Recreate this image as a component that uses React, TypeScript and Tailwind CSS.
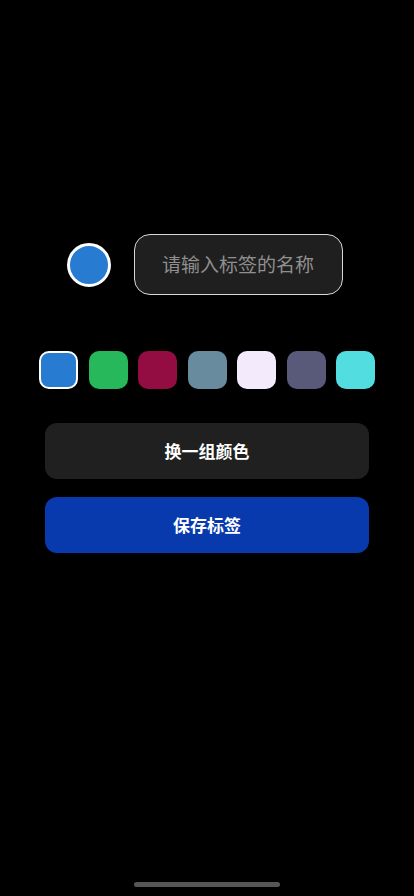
import React from "react";

const colors = ["#277cd2", "#27b85c", "#930d43", "#688b9e", "#f3eafb", "#59597a", "#52dde0"];

export default function App() {
  return (
    <div
      className="relative h-[896px] w-[414px] overflow-hidden bg-black"
      style={{ fontFamily: '"Noto Sans CJK SC", "Noto Sans", sans-serif' }}
    >
      <div className="flex flex-col items-center pt-[234px]">
        <div className="flex items-center gap-[23px] pr-[5px]">
          <div className="h-[44px] w-[44px] rounded-full border-[3px] border-white bg-[#277cd2]" />
          <div className="flex h-[61px] w-[209px] items-center justify-center rounded-[16px] border border-[#d8d8d8] bg-[#1f1f1f]">
            <span className="text-[19px] text-[#8f8f8f]">请输入标签的名称</span>
          </div>
        </div>

        <div className="mt-[56px] flex gap-[10.5px]">
          {colors.map((c, i) => (
            <div
              key={c}
              className={
                i === 0
                  ? "h-[38px] w-[39px] rounded-[10px] border-2 border-white"
                  : "h-[38px] w-[39px] rounded-[10px]"
              }
              style={{ backgroundColor: c }}
            />
          ))}
        </div>

        <div className="mt-[34px] flex w-[324px] flex-col gap-[18px]">
          <button className="flex h-[56px] items-center justify-center rounded-[12px] bg-[#202020] text-[17px] font-bold text-white">
            换一组颜色
          </button>
          <button className="flex h-[56px] items-center justify-center rounded-[12px] bg-[#083aae] text-[17px] font-bold text-white">
            保存标签
          </button>
        </div>
      </div>

      <div className="absolute bottom-[9px] left-[134px] h-[5px] w-[146px] rounded-full bg-[#565656]" />
    </div>
  );
}
